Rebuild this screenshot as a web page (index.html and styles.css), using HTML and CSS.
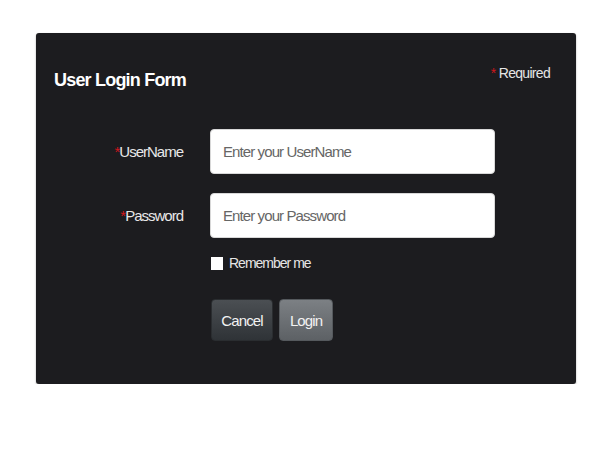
FILE: index.html
```html
<!DOCTYPE html>
<html lang="en">
<head>
<meta charset="utf-8">
<title>User Login Form</title>
<link rel="stylesheet" href="styles.css">
</head>
<body>
<div class="panel">
  <div class="header">
    <h1 class="title">User Login Form</h1>
    <div class="required"><span class="star">*</span> Required</div>
  </div>
  <form class="form">
    <label class="label" for="user"><span class="star">*</span>UserName</label>
    <input class="field" id="user" type="text" placeholder="Enter your UserName">
    <label class="label" for="pass"><span class="star">*</span>Password</label>
    <input class="field" id="pass" type="password" placeholder="Enter your Password">
    <div class="check-row">
      <input class="check" id="rem" type="checkbox">
      <label class="check-label" for="rem">Remember me</label>
    </div>
    <div class="actions">
      <button type="button" class="btn btn-cancel">Cancel</button>
      <button type="button" class="btn btn-login">Login</button>
    </div>
  </form>
</div>
</body>
</html>
```
FILE: styles.css
```css
html, body {
  margin: 0;
  padding: 0;
  background: #ffffff;
}
body {
  font-family: "Liberation Sans", Arial, sans-serif;
  padding: 33px 36px 0 36px;
}
.panel {
  width: 540px;
  height: 351px;
  box-sizing: border-box;
  background: #1c1c1f;
  border-radius: 3px;
  box-shadow: 0 1px 2px rgba(0,0,0,0.35);
}
.header {
  display: flex;
  justify-content: space-between;
  align-items: flex-start;
  height: 96px;
  padding: 0 26px 0 18px;
}
.title {
  margin: 36px 0 0 0;
  font-size: 18px;
  line-height: 22px;
  font-weight: bold;
  letter-spacing: -0.8px;
  color: #ffffff;
}
.required {
  margin-top: 31px;
  font-size: 14px;
  line-height: 18px;
  letter-spacing: -0.7px;
  color: #e6e6e6;
}
.star {
  color: #d0161b;
}
.form {
  display: grid;
  grid-template-columns: 147px 285px;
  column-gap: 27px;
  row-gap: 19px;
  align-items: center;
  margin: 0;
}
.label {
  justify-self: end;
  font-size: 15px;
  letter-spacing: -1px;
  color: #e8e8e8;
}
.field {
  box-sizing: border-box;
  width: 285px;
  height: 45px;
  margin: 0;
  border: 1px solid #d8d8d8;
  border-radius: 4px;
  background: #ffffff;
  padding: 0 12px;
  font-family: "Liberation Sans", Arial, sans-serif;
  font-size: 15px;
  letter-spacing: -0.9px;
  color: #333;
  outline: none;
}
.field::placeholder {
  color: #666666;
}
.check-row {
  grid-column: 2;
  display: flex;
  align-items: center;
  gap: 6px;
  height: 14px;
  margin-top: -1px;
  padding-left: 1px;
}
.check {
  appearance: none;
  -webkit-appearance: none;
  width: 12px;
  height: 13px;
  margin: 0;
  background: #ffffff;
  border: none;
  border-radius: 0;
}
.check-label {
  font-size: 14px;
  letter-spacing: -1px;
  color: #e6e6e6;
}
.actions {
  grid-column: 2;
  display: flex;
  gap: 6px;
  margin-top: 10px;
  padding-left: 1px;
}
.btn {
  height: 42px;
  box-sizing: border-box;
  border-radius: 4px;
  font-family: "Liberation Sans", Arial, sans-serif;
  font-size: 15px;
  letter-spacing: -0.9px;
  color: #f2f2f2;
  padding: 0;
  cursor: pointer;
}
.btn-cancel {
  width: 62px;
  border: 1px solid #2a2d30;
  background: linear-gradient(#4b4f53, #2f3337);
}
.btn-login {
  width: 54px;
  border: 1px solid #55595d;
  background: linear-gradient(#7c8084, #5d6165);
}
```
